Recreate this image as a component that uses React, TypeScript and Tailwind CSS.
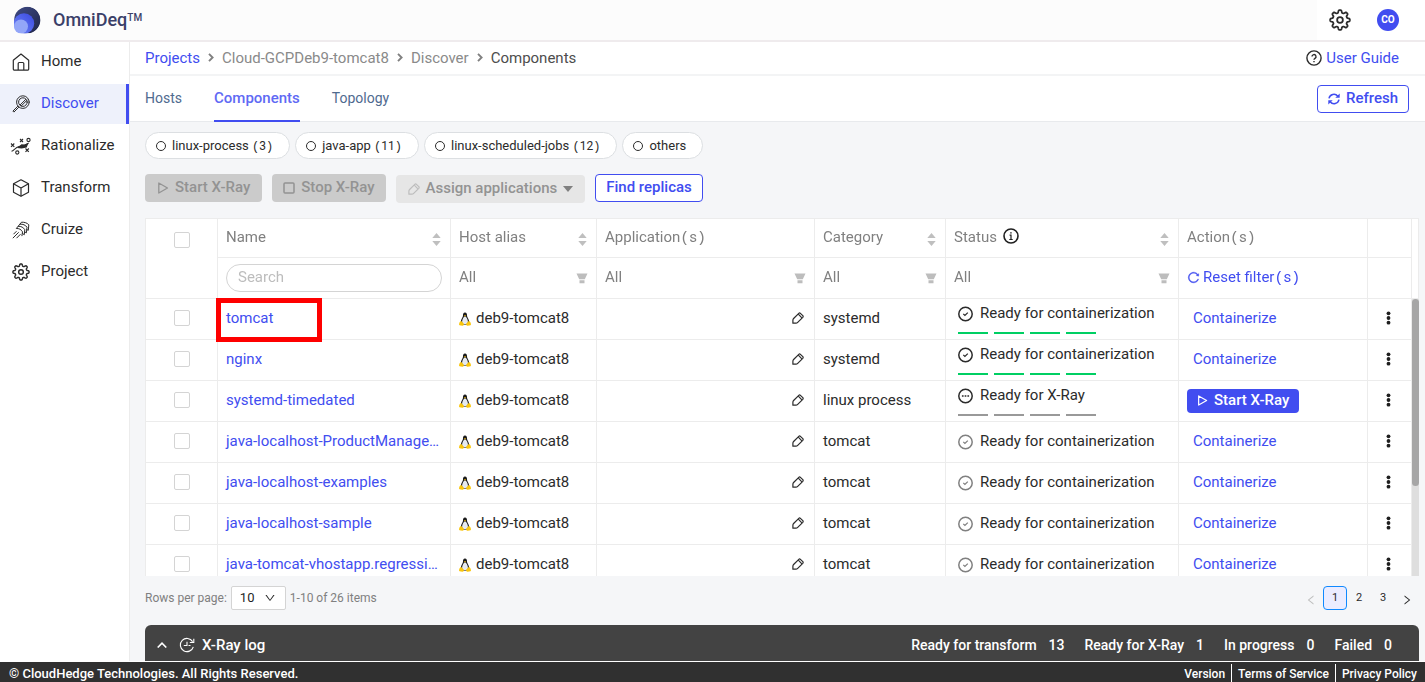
import React from "react";
import { AiOutlineReload, AiOutlineDown, AiOutlineLeft, AiOutlineRight } from "react-icons/ai";

type IconProps = { className?: string };

function Logo() {
  return (
    <svg className="size-7" viewBox="0 0 28 28" aria-hidden="true">
      <defs>
        <linearGradient id="outer" x1="0" y1="0" x2="1" y2="1">
          <stop offset="0" stopColor="#3f4b86" />
          <stop offset="1" stopColor="#1f2548" />
        </linearGradient>
        <linearGradient id="middle" x1="0" y1="1" x2="1" y2="0">
          <stop offset="0" stopColor="#6f86f8" />
          <stop offset="1" stopColor="#3a49e0" />
        </linearGradient>
        <clipPath id="disc">
          <path d="M1 10A13.500 13.500 0 1 1 14 27.500H4Q1 27.500 1 24Z" />
        </clipPath>
      </defs>
      <g clipPath="url(#disc)">
        <circle cx="14.500" cy="14" r="13.300" fill="url(#outer)" />
        <circle cx="11" cy="17.500" r="10.200" fill="url(#middle)" />
        <circle cx="8" cy="20.500" r="7" fill="#93a6f8" />
      </g>
    </svg>
  );
}

/* Eight rounded teeth traced round a circle. */
const gearOutline =
  Array.from({ length: 161 }, (_, i) => {
    const a = (i / 160) * Math.PI * 2;
    const r = 7.8 + 1.2 * Math.tanh(2 * Math.cos(8 * a));
    return `${i === 0 ? "M" : "L"}${(10 + r * Math.sin(a)).toFixed(2)} ${(10 - r * Math.cos(a)).toFixed(2)}`;
  }).join("") + "Z";

function GearIcon({ className }: IconProps) {
  return (
    <svg className={className} viewBox="0 0 20 20" fill="none" stroke="#2b2b2b" strokeWidth="1.600" strokeLinejoin="round" aria-hidden="true">
      <path d={gearOutline} />
      <circle cx="10" cy="10" r="2.600" />
    </svg>
  );
}

function HomeIcon() {
  return (
    <svg className="size-[18px]" viewBox="0 0 18 18" fill="none" stroke="#2b2b2b" strokeWidth="1.200" strokeLinejoin="round" aria-hidden="true">
      <path d="M1.300 7.300 9 1l7.700 6.300V16a1.200 1.200 0 0 1-1.200 1.200h-13A1.200 1.200 0 0 1 1.300 16z" />
      <path d="M6.200 17V10.500a1 1 0 0 1 1-1h3.600a1 1 0 0 1 1 1V17" />
    </svg>
  );
}

function DiscoverIcon() {
  return (
    <svg className="size-[18px]" viewBox="0 0 18 18" fill="none" stroke="#2b2b2b" strokeWidth="1" strokeLinecap="round" aria-hidden="true">
      <circle cx="10.900" cy="7.100" r="6.300" />
      <circle cx="10.900" cy="7.100" r="4.300" />
      <path d="m8.300 9.800 5.400-5.400M9.200 11 15 5.300" />
      <path d="M5.600 11.400.9 16.100l1 1 4.700-4.700z" />
    </svg>
  );
}

function RationalizeIcon() {
  return (
    <svg className="h-[18px] w-[22px]" viewBox="0 0 22 18" fill="none" stroke="#2b2b2b" strokeWidth="1.100" aria-hidden="true">
      <path d="m1 6.500 3.300 3.300M4.300 6.500 1 9.800M10 2l3 3M13 2l-3 3M15.500 11.500l3.300 3.300M18.800 11.500l-3.300 3.300" />
      <circle cx="18.500" cy="3" r="1.600" />
      <circle cx="7.300" cy="15.500" r="1.600" />
      <path d="M1.500 14.200c2.500-.4 3.500-3.700 7.500-4.700s5.500 0 9.500-3.200" />
      <path d="M7 11 11.500 7.300l3 .2 4-1.800-1.800 4.800-5 1z" fill="#2b2b2b" stroke="none" />
    </svg>
  );
}

function TransformIcon() {
  return (
    <svg className="size-[18px]" viewBox="0 0 18 18" fill="none" stroke="#2b2b2b" strokeWidth="1.200" strokeLinejoin="round" aria-hidden="true">
      <path d="M9 .8 16.500 4.800v8.400L9 17.200l-7.500-4V4.800z" />
      <path d="M1.500 4.800 9 9l7.500-4.200M9 9v8.200" />
    </svg>
  );
}

function CruizeIcon() {
  return (
    <svg className="size-[18px]" viewBox="0 0 18 18" fill="none" stroke="#2b2b2b" strokeWidth="1" strokeLinejoin="round" aria-hidden="true">
      <path d="M9.500 1.200c3-.2 5.800.8 7.300 2.600l-.5 5.500-1.800-.8" />
      <path d="M7.800 3.200c3.200-.3 5.700.9 7.200 3l-.6 5.600-1.900-1" />
      <path d="M6 5.300c3.200-.2 5.500 1.200 6.800 3.400l-.5 5-2-1.300" />
      <path d="M4.300 7.500c2.800-.2 4.800 1 6.200 3.300l-.6 4.300" />
      <path d="M9.500 1.200 4.300 7.500M.8 17.200l5.900-5.900M4.500 17.200l4-4M1.500 13.200l3-3" />
    </svg>
  );
}

function PlayIcon({ className }: IconProps) {
  return (
    <svg className={className} viewBox="0 0 12 12" fill="none" stroke="currentColor" strokeWidth="1.300" strokeLinejoin="round" aria-hidden="true">
      <path d="M1.800 1v10l8.700-5z" />
    </svg>
  );
}

function PenIcon({ className }: IconProps) {
  return (
    <svg className={className} viewBox="0 0 12 12" fill="none" stroke="currentColor" strokeWidth="1.200" strokeLinejoin="round" aria-hidden="true">
      <path d="M6.800 1.300Q7.600.5 8.400 1.300L10.800 3.700Q11.500 4.500 10.800 5.300L5.700 10.400Q4.900 11.200 3.900 11.200H.9V8.200Q.9 7.200 1.600 6.500z" />
      <path d="M6.300 2.200 9.900 5.800" />
    </svg>
  );
}

function RefreshIcon() {
  return (
    <svg className="size-3" viewBox="0 0 12 12" fill="none" stroke="currentColor" strokeWidth="1.500" aria-hidden="true">
      <path d="M1 5.300A5 5 0 0 1 9.800 3.200M11 6.700A5 5 0 0 1 2.200 8.800" />
      <path d="M11.700.4v4.400H7.300zM.3 11.600V7.200h4.400z" fill="currentColor" stroke="none" />
    </svg>
  );
}

function HelpIcon() {
  return (
    <svg className="size-4" viewBox="0 0 16 16" fill="none" stroke="#2b2b2b" strokeWidth="1.400" aria-hidden="true">
      <circle cx="8" cy="8" r="7.100" />
      <path d="M6 6.600a2 2 0 1 1 3 1.700c-.7.400-1 .7-1 1.500M8 10.900v1.300" />
    </svg>
  );
}

function InfoIcon() {
  return (
    <svg className="ml-0.5 inline size-4 align-[-2px]" viewBox="0 0 16 16" fill="none" stroke="#1f1f1f" strokeWidth="1.600" aria-hidden="true">
      <circle cx="8" cy="8" r="7" />
      <path d="M6.600 7.200H8v4.300M6.300 11.500h3.400M7.200 4.900h1.500" strokeWidth="1.200" />
    </svg>
  );
}

function Crumb() {
  return (
    <svg className="h-[9px] w-1.5" viewBox="0 0 6 9" fill="none" stroke="#808080" strokeWidth="1.900" aria-hidden="true">
      <path d="m1 .9 3.600 3.600L1 8.100" />
    </svg>
  );
}

function DotsIcon() {
  return (
    <svg className="size-4" viewBox="0 0 16 16" fill="#1f1f1f" aria-hidden="true">
      <circle cx="8.500" cy="3.300" r="1.900" />
      <circle cx="8.500" cy="8" r="1.900" />
      <circle cx="8.500" cy="12.700" r="1.900" />
    </svg>
  );
}

function Tux() {
  return (
    <svg className="mt-0.5 h-[14px] w-3 shrink-0" viewBox="0 0 12 14" aria-hidden="true">
      <path d="M6 .5C4.400.5 3.900 1.900 4 3.500 4.100 5.100 2.200 6.800 1.900 9.200c-.2 2 .9 3.500 2 3.900h4.200c1.100-.4 2.300-1.900 2-3.900C9.800 6.800 7.900 5.100 8 3.500 8.100 1.900 7.600.5 6 .5z" fill="#1b1b1b" />
      <path d="M6 4.300C4.600 4.900 3.100 7.400 3.100 9.700 3.100 11.400 4.300 12.600 6 12.600s2.900-1.200 2.900-2.900C8.900 7.400 7.400 4.900 6 4.300z" fill="#e6eaef" />
      <path d="M4.900 3.300h2.200L6 4.800z" fill="#f4bd12" />
      <path d="M2.200 9 4.700 11.500c.7 1.200-.2 2.400-1.400 2.200L.6 13.300c-.7-.2-.6-1-.4-1.700 0-1.200 1-2.400 2-2.600zM9.800 9 7.300 11.500c-.7 1.200.2 2.400 1.400 2.200l2.700-.4c.7-.2.6-1 .4-1.700 0-1.200-1-2.400-2-2.600z" fill="#fac60c" />
    </svg>
  );
}

function SortIcon() {
  return (
    <svg className="mt-1 mr-px h-[13px] w-[9px] shrink-0" viewBox="0 0 9 13" fill="#bfbfbf" aria-hidden="true">
      <path d="M4.500 0 8.700 5H.3zM4.500 13 .3 8h8.400z" />
    </svg>
  );
}

function FilterIcon() {
  return (
    <svg className="mt-0.5 h-[11px] w-3 shrink-0" viewBox="0 0 12 11" fill="#bdbdbd" aria-hidden="true">
      <path d="M.5.500h11L8.800 6.200H3.200zM3.500 7.200h5v3h-5z" />
    </svg>
  );
}

function StatusIcon({ kind }: { kind: "done" | "idle" | "wait" }) {
  return (
    <svg className={kind === "idle" ? "mt-0.5 size-4 shrink-0 text-[#808080]" : "mt-0.5 size-4 shrink-0 text-[#2b2b2b]"} viewBox="0 0 16 16" fill="none" stroke="currentColor" strokeWidth="1.500" aria-hidden="true">
      <circle cx="7.500" cy="8" r="6.700" />
      {kind === "wait" ? (
        <path d="M3.900 8h1.700M6.650 8h1.700M9.400 8h1.700" strokeWidth="1.600" />
      ) : (
        <path d="m5.300 7.900 1.600 1.500 2.900-2.800" strokeWidth="1.300" />
      )}
    </svg>
  );
}

function LogIcon() {
  return (
    <svg className="size-4" viewBox="0 0 16 16" fill="none" stroke="currentColor" strokeWidth="1.100" aria-hidden="true">
      <path d="M13.600 4.600A6.600 6.600 0 1 0 14.300 9.800" />
      <path d="M14.800 1.800v3.700h-4M8 4.800V8.500H4.800M9.500 8.500h2" />
    </svg>
  );
}

/* Brackets are set in the fixed-width face. */
function Bracketed({ children }: { children: React.ReactNode }) {
  return (
    <>
      <span className="font-['Liberation_Mono',monospace] leading-none">(</span>
      {children}
      <span className="font-['Liberation_Mono',monospace] leading-none">)</span>
    </>
  );
}

const nav = [
  { label: "Home", icon: <HomeIcon /> },
  { label: "Discover", icon: <DiscoverIcon />, active: true },
  { label: "Rationalize", icon: <RationalizeIcon /> },
  { label: "Transform", icon: <TransformIcon /> },
  { label: "Cruize", icon: <CruizeIcon /> },
  { label: "Project", icon: <GearIcon className="size-[18px]" /> },
];

const chips = [
  { label: "linux-process", count: 3 },
  { label: "java-app", count: 11 },
  { label: "linux-scheduled-jobs", count: 12 },
  { label: "others" },
];

type Row = { name: string; category: string; status: string; kind: "done" | "idle" | "wait"; steps?: "green" | "gray" };

const ready = "Ready for containerization";
const rows: Row[] = [
  { name: "tomcat", category: "systemd", status: ready, kind: "done", steps: "green" },
  { name: "nginx", category: "systemd", status: ready, kind: "done", steps: "green" },
  { name: "systemd-timedated", category: "linux process", status: "Ready for X-Ray", kind: "wait", steps: "gray" },
  { name: "java-localhost-ProductManage…", category: "tomcat", status: ready, kind: "idle" },
  { name: "java-localhost-examples", category: "tomcat", status: ready, kind: "idle" },
  { name: "java-localhost-sample", category: "tomcat", status: ready, kind: "idle" },
  { name: "java-tomcat-vhostapp.regressi…", category: "tomcat", status: ready, kind: "idle" },
];

const totals = [
  { label: "Ready for transform", value: 13 },
  { label: "Ready for X-Ray", value: 1 },
  { label: "In progress", value: 0 },
  { label: "Failed", value: 0 },
];

const cell = "border-r border-b border-[#ececec] px-2 pb-0.5 text-left font-normal";
const box = "block size-4 appearance-none rounded-[2px] border border-[#d4d4d4] bg-white";

function AllFilter({ label }: { label: string }) {
  return (
    <div className="flex items-center">
      <select aria-label={label} className="min-w-0 flex-1 appearance-none bg-transparent text-[#808080]">
        <option>All</option>
      </select>
      <FilterIcon />
    </div>
  );
}

function ComponentTable() {
  return (
    <div className="flex min-h-0 flex-1 border-t border-l border-[#ececec] bg-white text-[15px]">
      <div className="min-w-0 flex-1 overflow-y-auto [scrollbar-width:none]">
        <table className="w-full table-fixed border-separate border-spacing-0 text-[#2b2b2b]">
          <colgroup>
            <col className="w-[72px]" />
            <col className="w-[233px]" />
            <col className="w-[146px]" />
            <col className="w-[218px]" />
            <col className="w-[131px]" />
            <col className="w-[233px]" />
            <col className="w-[189px]" />
            <col className="w-11" />
          </colgroup>
          <thead className="sticky top-0 z-10 bg-white text-[#808080]">
            <tr className="h-[39px]">
              <th rowSpan={2} className={`${cell} align-top`}>
                <input type="checkbox" aria-label="Select all" className={`${box} mx-auto mt-[13px]`} />
              </th>
              <th className={cell}>
                <div className="flex items-center justify-between">Name <SortIcon /></div>
              </th>
              <th className={cell}>
                <div className="flex items-center justify-between">Host alias <SortIcon /></div>
              </th>
              <th className={cell}>Application<Bracketed>s</Bracketed></th>
              <th className={cell}>
                <div className="flex items-center justify-between">Category <SortIcon /></div>
              </th>
              <th className={cell}>
                <div className="flex items-center">
                  <span className="flex-1">Status <InfoIcon /></span>
                  <SortIcon />
                </div>
              </th>
              <th className={cell}>Action<Bracketed>s</Bracketed></th>
              <th className={cell} aria-label="Menu" />
            </tr>
            <tr className="h-[41px]">
              <th className={cell}>
                <input
                  type="search"
                  placeholder="Search"
                  aria-label="Search names"
                  className="mt-0.5 block h-7 w-full rounded-full border border-[#d4d4d4] bg-white px-[11px] pb-0.5 placeholder:text-[#bdbdbd]"
                />
              </th>
              <th className={cell}><AllFilter label="Host alias filter" /></th>
              <th className={cell}><AllFilter label="Application filter" /></th>
              <th className={cell}><AllFilter label="Category filter" /></th>
              <th className={cell}><AllFilter label="Status filter" /></th>
              <th className={cell}>
                <button className="flex items-center whitespace-nowrap text-[#414df0]">
                  <AiOutlineReload className="mr-[3px] size-[13px] shrink-0" stroke="currentColor" strokeWidth="30" />
                  <span>Reset filter<Bracketed>s</Bracketed></span>
                </button>
              </th>
              <th className={cell} aria-label="Menu" />
            </tr>
          </thead>
          <tbody>
            {rows.map((row, i) => (
              <tr key={row.name} className="h-[41px]">
                <td className={cell}>
                  <input type="checkbox" aria-label={`Select ${row.name}`} className={`${box} mx-auto`} />
                </td>
                <td className={`${cell} relative`}>
                  <a href="#" className="block whitespace-nowrap text-[#414df0]">{row.name}</a>
                  {i === 0 && <div className="pointer-events-none absolute -top-px -left-0.5 z-20 h-11 w-[106px] border-[5px] border-[#fe0000]" />}
                </td>
                <td className={cell}>
                  <div className="flex items-center gap-[5px] whitespace-nowrap"><Tux />deb9-tomcat8</div>
                </td>
                <td className={cell}>
                  <button aria-label="Edit applications" className="mr-0.5 ml-auto block"><PenIcon className="size-3" /></button>
                </td>
                <td className={cell}>{row.category}</td>
                <td className={cell}>
                  <div className="flex items-center gap-1.5 pl-1 whitespace-nowrap"><StatusIcon kind={row.kind} />{row.status}</div>
                  {row.steps && (
                    <div className="mt-[9px] flex gap-1.5 pl-1">
                      {[0, 1, 2, 3].map((n) => (
                        <span key={n} className={row.steps === "green" ? "h-0.5 w-[30px] bg-[#00cf63]" : "h-0.5 w-[30px] bg-[#999999]"} />
                      ))}
                    </div>
                  )}
                </td>
                <td className={cell}>
                  {row.kind === "wait" ? (
                    <button className="mt-0.5 flex h-6 items-center gap-1.5 rounded bg-[#414df0] px-2.5 pb-0.5 font-medium whitespace-nowrap text-white">
                      <PlayIcon className="size-[11px]" />Start X-Ray
                    </button>
                  ) : (
                    <a href="#" className="ml-1.5 text-[#414df0]">Containerize</a>
                  )}
                </td>
                <td className={cell}>
                  <button aria-label={`Menu for ${row.name}`} className="ml-1 block"><DotsIcon /></button>
                </td>
              </tr>
            ))}
          </tbody>
        </table>
      </div>
      <div className="flex w-[7px] flex-col">
        <div className="h-20 border-r border-b border-[#ececec]" />
        <div className="flex-1 bg-[#dedede]">
          <div className="h-[187px] rounded-full bg-[#a6a6a6]" />
        </div>
      </div>
    </div>
  );
}

export default function App() {
  return (
    <div className="flex h-screen flex-col overflow-hidden bg-white font-[Roboto,sans-serif] text-[14px] leading-5 text-[#2b2b2b]">
      <header className="flex h-[42px] shrink-0 items-center border-b-2 border-[#efebed] bg-[#fcfcfc] pl-[13px]">
        <Logo />
        <h1 className="flex-1 pl-3 text-[18px] font-medium text-[#3a4068]">OmniDeq<sup className="text-[10px]">TM</sup></h1>
        <div className="flex h-full items-center gap-[26px] bg-white pr-[26px] pl-3">
          <button aria-label="Settings"><GearIcon className="size-[22px]" /></button>
          <button className="size-[22px] rounded-full bg-[#414df0] text-[10px] font-bold text-white">CO</button>
        </div>
      </header>

      <div className="flex min-h-0 flex-1">
        <nav className="flex w-[130px] shrink-0 flex-col gap-0.5 border-r border-[#ececec]">
          {nav.map((item) => (
            <a
              key={item.label}
              href="#"
              className={
                item.active
                  ? "flex h-10 items-center border-r-3 border-[#414df0] bg-[#eef1fb] text-[#414df0]"
                  : "flex h-10 items-center"
              }
            >
              <span className="flex w-[41px] justify-center">{item.icon}</span>
              <span className="pb-0.5 text-[15px]">{item.label}</span>
            </a>
          ))}
        </nav>

        <main className="flex min-w-0 flex-1 flex-col bg-[#f5f6f8]">
          <div className="flex h-[34px] shrink-0 items-center border-b-2 border-[#f3f4f5] bg-white pr-[26px] pl-[15px] text-[15px]">
            <nav aria-label="Breadcrumb" className="flex flex-1 items-center gap-2 pb-px text-[#8a8a8a]">
              <a href="#" className="text-[#414df0]">Projects</a>
              <Crumb />
              <a href="#">Cloud-GCPDeb9-tomcat8</a>
              <Crumb />
              <a href="#">Discover</a>
              <Crumb />
              <span className="text-[#4d4d4d]">Components</span>
            </nav>
            <a href="#" className="flex items-center gap-1 text-[#414df0]">
              <HelpIcon /><span className="pb-px">User Guide</span>
            </a>
          </div>

          <div className="flex h-[46px] shrink-0 items-center border-b border-[#e8eaed] bg-white pr-4 pl-[15px]">
            <div className="flex h-[46px] flex-1 gap-8 text-[14px] text-[#4f6a8f]">
              <a href="#" className="flex items-center pb-0.5">Hosts</a>
              <a href="#" className="flex items-center border-b-2 border-[#414df0] text-[15px] font-medium text-[#5f6af4]">Components</a>
              <a href="#" className="flex items-center pb-0.5">Topology</a>
            </div>
            <button className="flex h-7 items-center gap-1.5 rounded border border-[#414df0] px-2.5 text-[15px] font-medium text-[#414df0]">
              <RefreshIcon /><span className="pb-0.5">Refresh</span>
            </button>
          </div>

          <div className="flex min-h-0 flex-1 flex-col pt-2.5 pr-1.5 pl-[15px]">
            <div className="flex gap-[5px] text-[13px]">
              {chips.map((chip) => (
                <label key={chip.label} className="flex h-[27px] items-center gap-1.5 rounded-full border border-[#dcdfe2] bg-white pr-4 pl-2.5 whitespace-nowrap">
                  <input type="radio" name="kind" className="size-2.5 appearance-none rounded-full border border-[#2b2b2b]" />
                  <span>
                    {chip.label}
                    {chip.count && <> <span className="text-[12px] leading-none"><Bracketed>{chip.count}</Bracketed></span></>}
                  </span>
                </label>
              ))}
            </div>

            <div className="mt-[15px] flex gap-2.5 text-[15px] font-medium text-[#939393]">
              <button className="flex h-7 items-center gap-1.5 rounded bg-[#cbcbcb] px-3">
                <PlayIcon className="size-3" /><span className="pb-0.5">Start X-Ray</span>
              </button>
              <button className="flex h-7 items-center gap-1.5 rounded bg-[#cbcbcb] px-[11px]">
                <svg className="size-3" viewBox="0 0 12 12" fill="none" stroke="currentColor" strokeWidth="1.500" aria-hidden="true">
                  <rect x="1" y="1" width="10" height="10" rx="1" />
                </svg>
                <span className="pb-0.5">Stop X-Ray</span>
              </button>
              <button className="mt-px flex h-7 items-center gap-1.5 rounded bg-[#e6e6e6] px-3">
                <PenIcon className="size-3 text-[#bdbdbd]" /><span className="pb-0.5">Assign applications</span>
                <svg className="h-1.5 w-2.5" viewBox="0 0 10 6" fill="#808080" aria-hidden="true"><path d="M0 0h10L5 6z" /></svg>
              </button>
              <button className="h-7 rounded border border-[#414df0] bg-white px-2.5 pb-0.5 text-[#414df0]">Find replicas</button>
            </div>

            <div className="mt-[15px] flex min-h-0 flex-1 flex-col">
              <ComponentTable />
            </div>

            <div className="mt-2.5 flex h-6 shrink-0 items-center text-[12px] text-[#808080]">
              <label htmlFor="page-size">Rows per page:</label>
              <div className="relative mx-1">
                <select id="page-size" className="block h-6 w-[55px] appearance-none rounded-[2px] border border-[#d4d4d4] bg-white pl-2 text-[13px] text-[#1f1f1f]">
                  <option>10</option>
                </select>
                <AiOutlineDown className="pointer-events-none absolute top-1.5 right-2.5 size-3 text-[#2b2b2b]" />
              </div>
              <span className="flex-1">1-10 of 26 items</span>
              <div className="flex items-center text-[11px] text-[#2b2b2b]">
                <button aria-label="Previous page" className="mr-1.5 text-[#bdbdbd]"><AiOutlineLeft className="mt-1 size-3" /></button>
                <button className="size-6 rounded border border-[#1089ff] bg-[#ebecff]">1</button>
                <button className="size-6">2</button>
                <button className="size-6">3</button>
                <button aria-label="Next page" className="mr-1.5 ml-1.5"><AiOutlineRight className="mt-1 size-3" /></button>
              </div>
            </div>

            <div className="mt-[15px] flex h-9 shrink-0 items-center rounded-t-md bg-[#434343] pt-1 pr-[27px] pl-3 font-medium text-white">
              <button className="flex items-center">
                <svg className="mr-3 h-1.5 w-2.5" viewBox="0 0 10 6" fill="none" stroke="currentColor" strokeWidth="1.600" aria-hidden="true"><path d="m.7 5.500 4.300-4.300 4.300 4.300" /></svg>
                <LogIcon />
                <span className="pl-[7px] text-[15px]">X-Ray log</span>
              </button>
              <div className="flex flex-1 justify-end gap-5">
                {totals.map((t) => (
                  <span key={t.label} className="flex gap-3"><span>{t.label}</span><span>{t.value}</span></span>
                ))}
              </div>
            </div>
          </div>
        </main>
      </div>

      <footer className="flex h-[21px] shrink-0 items-center border-t border-white bg-[#303030] pt-1 pr-2 pl-[9px] text-[12px] font-medium text-white">
        <span className="flex-1 text-[13px]">© CloudHedge Technologies. All Rights Reserved.</span>
        <a href="#">Version</a>
        <a href="#" className="ml-1.5 border-l border-white pl-1.5">Terms of Service</a>
        <a href="#" className="ml-1.5 border-l border-white pl-1.5">Privacy Policy</a>
      </footer>
    </div>
  );
}
